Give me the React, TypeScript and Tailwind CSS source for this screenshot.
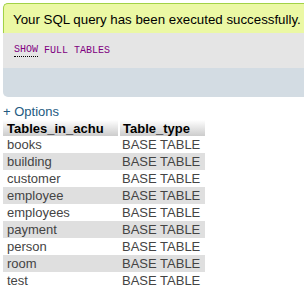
import React from "react";

const rows = ["books", "building", "customer", "employee", "employees", "payment", "person", "room", "test"];

export default function App() {
  return (
    <div className="w-[304px] h-[294px] overflow-hidden bg-white text-[#444]" style={{ fontFamily: '"Liberation Sans", Arial, sans-serif' }}>
      <div className="pt-[3px] pl-[3px]">
        <div className="w-[340px]">
          <div className="h-[30px] bg-[#ebf8a4] border border-[#a2d246] border-r-0 border-b-0 rounded-tl-[5px] pl-[9px] pt-[3px] flex items-center whitespace-nowrap text-[13.3px] text-[#000] shadow-[0_1px_1px_#ddd]">
            Your SQL query has been executed successfully.
          </div>
          <div className="h-[35px] bg-[#e5e5e5] pl-[11px] flex items-center text-[10px] text-[#800080]" style={{ fontFamily: '"Liberation Mono", "DejaVu Sans Mono", monospace' }}>
            <span className="border-b border-dotted border-black leading-[12px]">SHOW</span>
            <span>&nbsp;FULL TABLES</span>
          </div>
          <div className="h-[29px] bg-[#d3dce3] rounded-bl-[5px]"></div>
        </div>
        <div className="mt-[6px] text-[13px] leading-[17px] text-[#235a81]">+ Options</div>
        <table className="text-[13px] border-collapse">
          <thead>
            <tr>
              <th className="h-[16px] text-left font-bold text-black px-[4px] w-[116px] border-r-2 border-white bg-gradient-to-b from-white to-[#cccccc] leading-[15px]">Tables_in_achu</th>
              <th className="h-[16px] text-left font-bold text-black px-[3px] w-[86px] bg-gradient-to-b from-white to-[#cccccc] leading-[15px]">Table_type</th>
            </tr>
          </thead>
          <tbody>
            {rows.map((r, i) => (
              <tr key={r} className={i % 2 === 1 ? "bg-[#dfdfdf]" : "bg-white"}>
                <td className="h-[17px] px-[4px] leading-[15px]">{r}</td>
                <td className="h-[17px] px-[3px] leading-[15px]">BASE TABLE</td>
              </tr>
            ))}
          </tbody>
        </table>
      </div>
    </div>
  );
}
